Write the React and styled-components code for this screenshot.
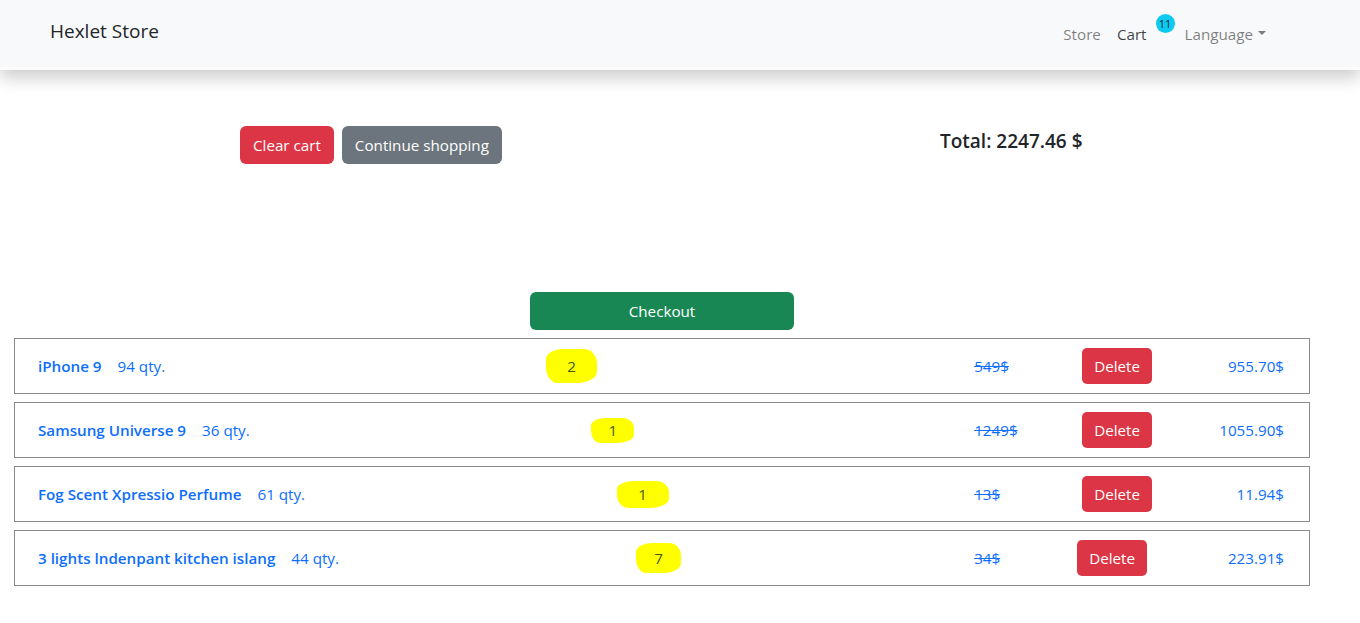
import React from "react";
import styled, { createGlobalStyle } from "styled-components";

const Global = createGlobalStyle`
  * { box-sizing: border-box; }
  body {
    margin: 0;
    font-family: "Open Sans", "Noto Sans", "Liberation Sans", sans-serif;
    font-size: 15.2px;
    color: #212529;
    background: #fff;
  }
`;

const Navbar = styled.nav`
  height: 70px;
  background: #f8f9fa;
  border-bottom: 3px solid #fcfcfd;
  box-shadow: 0 8px 16px rgba(0, 0, 0, 0.2);
  display: flex;
  align-items: center;
  padding: 0 94px 0 50px;
  position: relative;
  z-index: 1;
`;

const Brand = styled.a`
  font-size: 19px;
  color: #212529;
  text-decoration: none;
  margin-top: -6px;
`;

const NavLinks = styled.div`
  margin-left: auto;
  display: flex;
  align-items: center;
  gap: 16px;
  margin-top: 1px;
`;

const NavLink = styled.a`
  font-size: 15.2px;
  color: ${(p) => (p.$active ? "rgba(0,0,0,0.75)" : "rgba(0,0,0,0.5)")};
  text-decoration: none;
  display: inline-flex;
  align-items: center;
`;

const Badge = styled.span`
  width: 19px;
  height: 19px;
  border-radius: 50%;
  background: #0dcaf0;
  color: #1b2a33;
  font-size: 11px;
  display: inline-flex;
  align-items: center;
  justify-content: center;
  margin-left: 9px;
  margin-right: -6px;
  transform: translateY(-11px);
`;

const Caret = styled.span`
  display: inline-block;
  margin-left: 5px;
  border-top: 4px solid rgba(0, 0, 0, 0.5);
  border-left: 4px solid transparent;
  border-right: 4px solid transparent;
  transform: translateY(-1px);
`;

const Main = styled.main`
  padding: 56px 50px 40px 14px;
`;

const TopBar = styled.div`
  display: grid;
  grid-template-columns: 700px auto;
  align-items: center;
  padding-left: 226px;
  height: 38px;
`;

const Btn = styled.button`
  font-family: inherit;
  font-size: 15.2px;
  line-height: 24px;
  padding: 6px 12px;
  border: 1px solid transparent;
  border-radius: 6px;
  color: #fff;
  background: ${(p) => p.$bg};
  cursor: pointer;
`;

const ActionGroup = styled.div`
  display: flex;
  gap: 8px;
`;

const Total = styled.h5`
  margin: 0;
  font-size: 19px;
  font-weight: 600;
  transform: translateY(-4px);
`;

const CheckoutWrap = styled.div`
  width: 1296px;
  display: flex;
  justify-content: center;
  margin-top: 128px;
  margin-bottom: 8px;
`;

const CheckoutBtn = styled(Btn)`
  width: 264px;
`;

const List = styled.div`
  width: 1296px;
  display: flex;
  flex-direction: column;
  gap: 8px;
`;

const Row = styled.div`
  height: 56px;
  border: 1px solid #8a8a8a;
  display: flex;
  align-items: center;
  padding: 0 25px 0 23px;
  color: #0d6efd;
`;

const Left = styled.div`
  flex: 1;
  display: flex;
  align-items: center;
`;

const Name = styled.span`
  font-weight: 600;
`;

const Stock = styled.span`
  margin-left: 16px;
`;

const CountCell = styled.div`
  flex: 1;
  display: flex;
  justify-content: center;
`;

const Mark = styled.span`
  display: inline-flex;
  align-items: center;
  justify-content: center;
  width: ${(p) => p.$w}px;
  height: ${(p) => p.$h}px;
  margin-left: ${(p) => p.$dx}px;
  background: #ffff00;
  color: #3b5d1b;
  border-radius: 34% 26% 38% 22% / 30% 42% 34% 48%;
  font-size: 15.2px;
`;

const Old = styled.span`
  width: ${(p) => 108 - p.$shift}px;
  text-decoration: line-through;
`;

const DeleteBtn = styled(Btn)`
  padding: 5px 11px;
  border-radius: 5px;
`;

const Price = styled.span`
  width: ${(p) => 132 + p.$shift}px;
  text-align: right;
`;

const items = [
  { name: "iPhone 9", stock: 94, count: 2, old: "549$", price: "955.70$", w: 51, h: 34, dx: 4, shift: 0 },
  { name: "Samsung Universe 9", stock: 36, count: 1, old: "1249$", price: "1055.90$", w: 43, h: 25, dx: 2, shift: 0 },
  { name: "Fog Scent Xpressio Perfume", stock: 61, count: 1, old: "13$", price: "11.94$", w: 52, h: 27, dx: 6, shift: 0 },
  { name: "3 lights lndenpant kitchen islang", stock: 44, count: 7, old: "34$", price: "223.91$", w: 45, h: 30, dx: 4, shift: 5 },
];

export default function App() {
  return (
    <>
      <Global />
      <Navbar>
        <Brand href="#">Hexlet Store</Brand>
        <NavLinks>
          <NavLink href="#">Store</NavLink>
          <NavLink href="#" $active>
            Cart<Badge>11</Badge>
          </NavLink>
          <NavLink href="#">
            Language<Caret />
          </NavLink>
        </NavLinks>
      </Navbar>
      <Main>
        <TopBar>
          <ActionGroup>
            <Btn $bg="#dc3545">Clear cart</Btn>
            <Btn $bg="#6c757d">Continue shopping</Btn>
          </ActionGroup>
          <Total>Total: 2247.46 $</Total>
        </TopBar>
        <CheckoutWrap>
          <CheckoutBtn $bg="#198754">Checkout</CheckoutBtn>
        </CheckoutWrap>
        <List>
          {items.map((it) => (
            <Row key={it.name}>
              <Left>
                <Name>{it.name}</Name>
                <Stock>{it.stock} qty.</Stock>
                <CountCell>
                  <Mark $w={it.w} $h={it.h} $dx={it.dx}>{it.count}</Mark>
                </CountCell>
              </Left>
              <Old $shift={it.shift}>{it.old}</Old>
              <DeleteBtn $bg="#dc3545">Delete</DeleteBtn>
              <Price $shift={it.shift}>{it.price}</Price>
            </Row>
          ))}
        </List>
      </Main>
    </>
  );
}
